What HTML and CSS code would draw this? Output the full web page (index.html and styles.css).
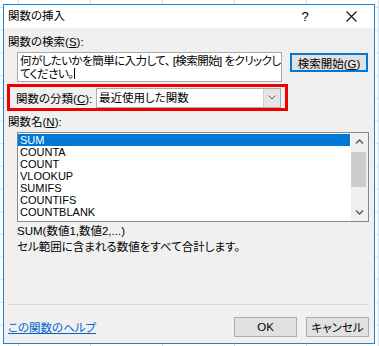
FILE: index.html
```html
<!DOCTYPE html>
<html lang="ja">
<head>
    <meta charset="UTF-8">
    <meta name="viewport" content="width=device-width, initial-scale=1.0">
    <title>関数の挿入</title>
    <link rel="stylesheet" href="styles.css">
</head>
<body>
    <div class="dialog">
        <div class="titlebar">
            <span class="title">関数の挿入</span>
            <span class="title-btn help">?</span>
            <span class="title-btn close">
                <svg width="11" height="11" viewBox="0 0 11 11"><path d="M0.5 0.5 L10.5 10.5 M10.5 0.5 L0.5 10.5" stroke="#111" stroke-width="1.1" fill="none"/></svg>
            </span>
        </div>
        <div class="content">
            <div class="label">関数の検索(<u>S</u>):</div>
            <div class="search-row">
                <div class="search-box">
                    <div class="line">何がしたいかを簡単に入力して、 [検索開始] をクリックし</div>
                    <div class="line">てください。<span class="caret"></span></div>
                </div>
                <button class="btn btn-default">検索開始(<u>G</u>)</button>
            </div>
            <div class="category">
                <span class="category-label">関数の分類(<u>C</u>):</span>
                <div class="select">
                    <span class="select-value">最近使用した関数</span>
                    <span class="select-arrow">
                        <svg width="8" height="5" viewBox="0 0 8 5"><path d="M0.5 0.5 L4 4 L7.5 0.5" stroke="#606060" stroke-width="1" fill="none"/></svg>
                    </span>
                </div>
            </div>
            <div class="label names-label">関数名(<u>N</u>):</div>
            <div class="listbox">
                <ul class="items">
                    <li class="selected">SUM</li>
                    <li>COUNTA</li>
                    <li>COUNT</li>
                    <li>VLOOKUP</li>
                    <li>SUMIFS</li>
                    <li>COUNTIFS</li>
                    <li>COUNTBLANK</li>
                </ul>
                <div class="scrollbar">
                    <span class="arrow">
                        <svg width="9" height="5" viewBox="0 0 9 5"><path d="M1 4.5 L4.5 1 L8 4.5" stroke="#606060" stroke-width="1.5" fill="none"/></svg>
                    </span>
                    <div class="track"><div class="thumb"></div></div>
                    <span class="arrow">
                        <svg width="9" height="5" viewBox="0 0 9 5"><path d="M1 0.5 L4.5 4 L8 0.5" stroke="#606060" stroke-width="1.5" fill="none"/></svg>
                    </span>
                </div>
            </div>
            <div class="syntax">SUM(数値1,数値2,...)</div>
            <div class="desc">セル範囲に含まれる数値をすべて合計します。</div>
            <div class="separator"></div>
            <div class="footer">
                <a class="help-link" href="#">この関数のヘルプ</a>
                <button class="btn ok-btn">OK</button>
                <button class="btn">キャンセル</button>
            </div>
        </div>
    </div>
</body>
</html>
```

FILE: styles.css
```css
body {
    margin: 0;
    padding: 4px 0 0 3px;
    font-family: "Liberation Sans", "Noto Sans CJK JP", sans-serif;
    font-size: 11.5px;
    font-feature-settings: "palt" 1;
    color: #000;
    background-color: #ffffff;
    background-image:
        linear-gradient(to right, #dadcdd 1px, transparent 1px),
        linear-gradient(to bottom, #dadcdd 1px, transparent 1px);
    background-size: 72px 22.7px;
    background-position: 18px 7px;
    height: 346px;
    box-sizing: border-box;
    overflow: hidden;
}
.dialog {
    width: 372px;
    height: 340px;
    box-sizing: border-box;
    border: 1px solid #1883d7;
    background-color: #f0f0f0;
}
.titlebar {
    height: 23px;
    background-color: #ffffff;
    display: flex;
    align-items: center;
}
.title {
    padding-left: 4px;
    line-height: 23px;
}
.title-btn {
    width: 46px;
    height: 23px;
    display: flex;
    align-items: center;
    justify-content: center;
}
.help {
    margin-left: auto;
    font-size: 13px;
}
.content {
    padding: 7px 5px 0 4px;
}
.label {
    line-height: 14px;
    height: 14px;
    white-space: nowrap;
}
.search-row {
    display: flex;
    margin-top: 3px;
}
.search-box {
    width: 265px;
    height: 30px;
    box-sizing: border-box;
    margin-left: 9px;
    border: 1px solid #a9a9a9;
    background-color: #ffffff;
    padding: 2px 0 0 2px;
    line-height: 13px;
    letter-spacing: -0.55px;
    white-space: nowrap;
    overflow: hidden;
}
.caret {
    display: inline-block;
    width: 1px;
    height: 11px;
    background-color: #000;
    vertical-align: -1px;
    margin-left: 1px;
}
.btn {
    font-family: inherit;
    font-size: inherit;
    font-feature-settings: inherit;
    color: #000;
    background-color: #e1e1e1;
    border: 1px solid #adadad;
    height: 20px;
    width: 63px;
    padding: 0;
    margin: 0;
}
.btn-default {
    width: 78px;
    height: 19px;
    margin: 1px 0 0 8px;
    border: 2px solid #0078d7;
}
.category {
    display: flex;
    align-items: center;
    width: 281px;
    height: 27px;
    box-sizing: border-box;
    margin: 2px 0 0 -1px;
    border: 3px solid #ee0000;
    padding-left: 6px;
}
.category-label {
    width: 80px;
    white-space: nowrap;
}
.select {
    display: flex;
    width: 185px;
    height: 20px;
    box-sizing: border-box;
    border: 1px solid #acacac;
    background-color: #ffffff;
}
.select-value {
    flex: 1;
    padding-left: 2px;
    line-height: 18px;
}
.select-arrow {
    width: 16px;
    background-color: #e5e5e5;
    border-left: 1px solid #cfcfcf;
    display: flex;
    align-items: center;
    justify-content: center;
}
.names-label {
    margin-top: 4px;
}
.listbox {
    display: flex;
    width: 352px;
    height: 90px;
    box-sizing: border-box;
    margin: 3px 0 0 9px;
    border: 1px solid #828790;
    background-color: #ffffff;
}
.items {
    list-style: none;
    margin: 0;
    padding: 1px 1px 0 0;
    flex: 1;
}
.items li {
    height: 12px;
    line-height: 12px;
    padding-left: 2px;
    font-size: 11px;
}
.items li.selected {
    background-color: #0078d7;
    color: #ffffff;
}
.scrollbar {
    width: 17px;
    background-color: #f0f0f0;
    display: flex;
    flex-direction: column;
}
.arrow {
    height: 17px;
    display: flex;
    align-items: center;
    justify-content: center;
}
.track {
    flex: 1;
    padding-top: 2px;
}
.thumb {
    width: 15px;
    height: 35px;
    background-color: #cdcdcd;
}
.syntax {
    margin: 2px 0 0 9px;
    line-height: 14px;
}
.desc {
    margin: 2px 0 0 9px;
    line-height: 14px;
}
.separator {
    margin-top: 50px;
    width: 361px;
    height: 1px;
    background-color: #d9d9d9;
}
.footer {
    display: flex;
    align-items: center;
    width: 361px;
    margin-top: 12px;
    height: 20px;
}
.help-link {
    color: #0066cc;
    text-decoration: underline;
}
.ok-btn {
    margin-left: auto;
    margin-right: 9px;
}
```
